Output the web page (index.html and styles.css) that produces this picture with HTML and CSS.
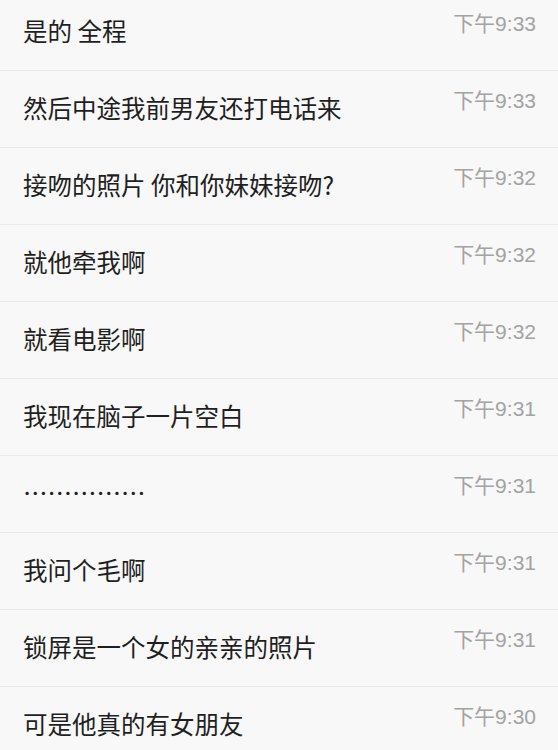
FILE: index.html
```html
<!DOCTYPE html>
<html lang="zh-CN">
<head>
<meta charset="utf-8">
<title>消息</title>
<link rel="stylesheet" href="styles.css">
</head>
<body>
<ul class="list">
  <li class="row"><span class="msg">是的 全程</span><span class="time">下午9:33</span></li>
  <li class="row"><span class="msg">然后中途我前男友还打电话来</span><span class="time">下午9:33</span></li>
  <li class="row"><span class="msg">接吻的照片 你和你妹妹接吻?</span><span class="time">下午9:32</span></li>
  <li class="row"><span class="msg">就他牵我啊</span><span class="time">下午9:32</span></li>
  <li class="row"><span class="msg">就看电影啊</span><span class="time">下午9:32</span></li>
  <li class="row"><span class="msg">我现在脑子一片空白</span><span class="time">下午9:31</span></li>
  <li class="row"><span class="msg">……………</span><span class="time">下午9:31</span></li>
  <li class="row"><span class="msg">我问个毛啊</span><span class="time">下午9:31</span></li>
  <li class="row"><span class="msg">锁屏是一个女的亲亲的照片</span><span class="time">下午9:31</span></li>
  <li class="row"><span class="msg">可是他真的有女朋友</span><span class="time">下午9:30</span></li>
</ul>
</body>
</html>
```
FILE: styles.css
```css
html, body {
  margin: 0;
  padding: 0;
  background: #f7f8f7;
  overflow: hidden;
}
body {
  width: 558px;
  height: 750px;
  font-family: "Noto Sans CJK SC", "Noto Sans", sans-serif;
}
.list {
  list-style: none;
  margin: -6px 0 0 0;
  padding: 0;
}
.row {
  display: flex;
  justify-content: space-between;
  align-items: flex-start;
  height: 76px;
  border-bottom: 1px solid #e8e9e8;
  padding: 0 22px 0 23px;
  box-sizing: content-box;
}
.msg {
  font-size: 24.5px;
  line-height: 24px;
  padding-top: 25px;
  color: #1f1f1f;
  white-space: nowrap;
}
.time {
  font-family: "Liberation Sans", "Noto Sans CJK SC", sans-serif;
  font-size: 21px;
  line-height: 20px;
  padding-top: 20px;
  color: #a3a3a3;
  white-space: nowrap;
}
```
